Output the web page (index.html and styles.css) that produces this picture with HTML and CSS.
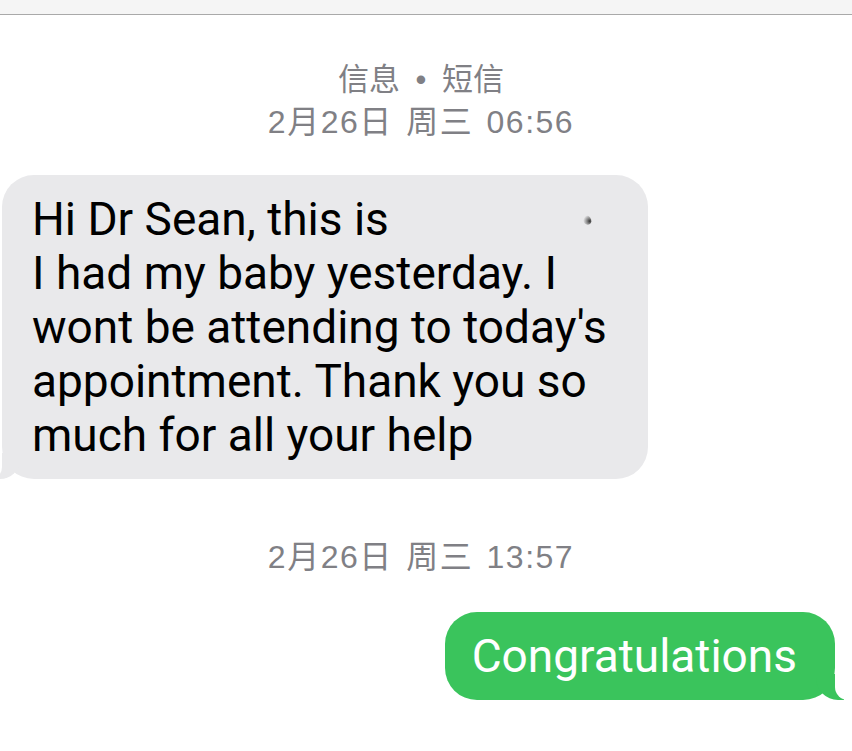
FILE: index.html
```html
<!DOCTYPE html>
<html lang="zh-CN">
<head>
    <meta charset="UTF-8">
    <meta name="viewport" content="width=device-width, initial-scale=1.0">
    <title>信息</title>
    <link rel="stylesheet" href="styles.css">
</head>
<body>
    <div class="top-bar"></div>
    <div class="thread">
        <div class="stamp stamp-first">
            <div class="service">信息 • 短信</div>
            <div>2月26日 周三 06:56</div>
        </div>
        <div class="row row-in">
            <div class="bubble bubble-in">
                Hi Dr Sean, this is<span class="smudge"></span><br>
                I had my baby yesterday. I<br>
                wont be attending to today's<br>
                appointment. Thank you so<br>
                much for all your help
            </div>
        </div>
        <div class="stamp stamp-second">2月26日 周三 13:57</div>
        <div class="row row-out">
            <div class="bubble bubble-out">Congratulations</div>
        </div>
    </div>
</body>
</html>
```

FILE: styles.css
```css
body {
    margin: 0;
    background-color: #fff;
    font-family: Roboto, "Liberation Sans", "Noto Sans CJK SC", sans-serif;
    overflow: hidden;
}
.top-bar {
    height: 14px;
    background-color: #f5f5f5;
    border-bottom: 1px solid #a9a9a9;
}
.thread {
    display: flex;
    flex-direction: column;
}
.stamp {
    color: #808085;
    font-family: "Liberation Sans", "Noto Sans CJK SC", sans-serif;
    font-size: 32px;
    line-height: 42px;
    letter-spacing: 1.5px;
    word-spacing: 3px;
    text-align: center;
    padding-right: 10px;
}
.stamp .service {
    font-size: 31px;
    letter-spacing: 0;
    word-spacing: 7px;
}
.stamp-first {
    margin-top: 44px;
}
.stamp-second {
    margin-top: 57px;
}
.row {
    display: flex;
}
.row-in {
    justify-content: flex-start;
    margin-top: 32px;
    padding-left: 2px;
}
.row-out {
    justify-content: flex-end;
    margin-top: 34px;
    padding-right: 17px;
}
.bubble {
    position: relative;
    border-radius: 32px;
    font-size: 46px;
    line-height: 54px;
}
.bubble-in {
    width: 646px;
    box-sizing: border-box;
    padding: 17px 30px;
    background-color: #e9e9eb;
    color: #000;
}
.bubble-out {
    padding: 17px 38px 17px 27px;
    background-color: #3ac45c;
    color: #fff;
}
/* tails */
.bubble-in::before,
.bubble-in::after,
.bubble-out::before,
.bubble-out::after {
    content: "";
    position: absolute;
    bottom: 0;
    height: 26px;
}
.bubble-in::before {
    left: -8px;
    width: 26px;
    background-color: #e9e9eb;
    border-bottom-right-radius: 20px;
}
.bubble-in::after {
    left: -14px;
    width: 14px;
    background-color: #fff;
    border-bottom-right-radius: 12px;
}
.bubble-out::before {
    right: -9px;
    width: 28px;
    background-color: #3ac45c;
    border-bottom-left-radius: 22px;
}
.bubble-out::after {
    right: -15px;
    width: 15px;
    background-color: #fff;
    border-bottom-left-radius: 13px;
}
.smudge {
    display: inline-block;
    width: 8px;
    height: 10px;
    margin-left: 194px;
    vertical-align: 10px;
    border-radius: 50%;
    background: radial-gradient(circle at 70% 75%, #333 0, #888 30%, rgba(200, 200, 200, 0) 70%);
    transform: rotate(-35deg);
}
```
